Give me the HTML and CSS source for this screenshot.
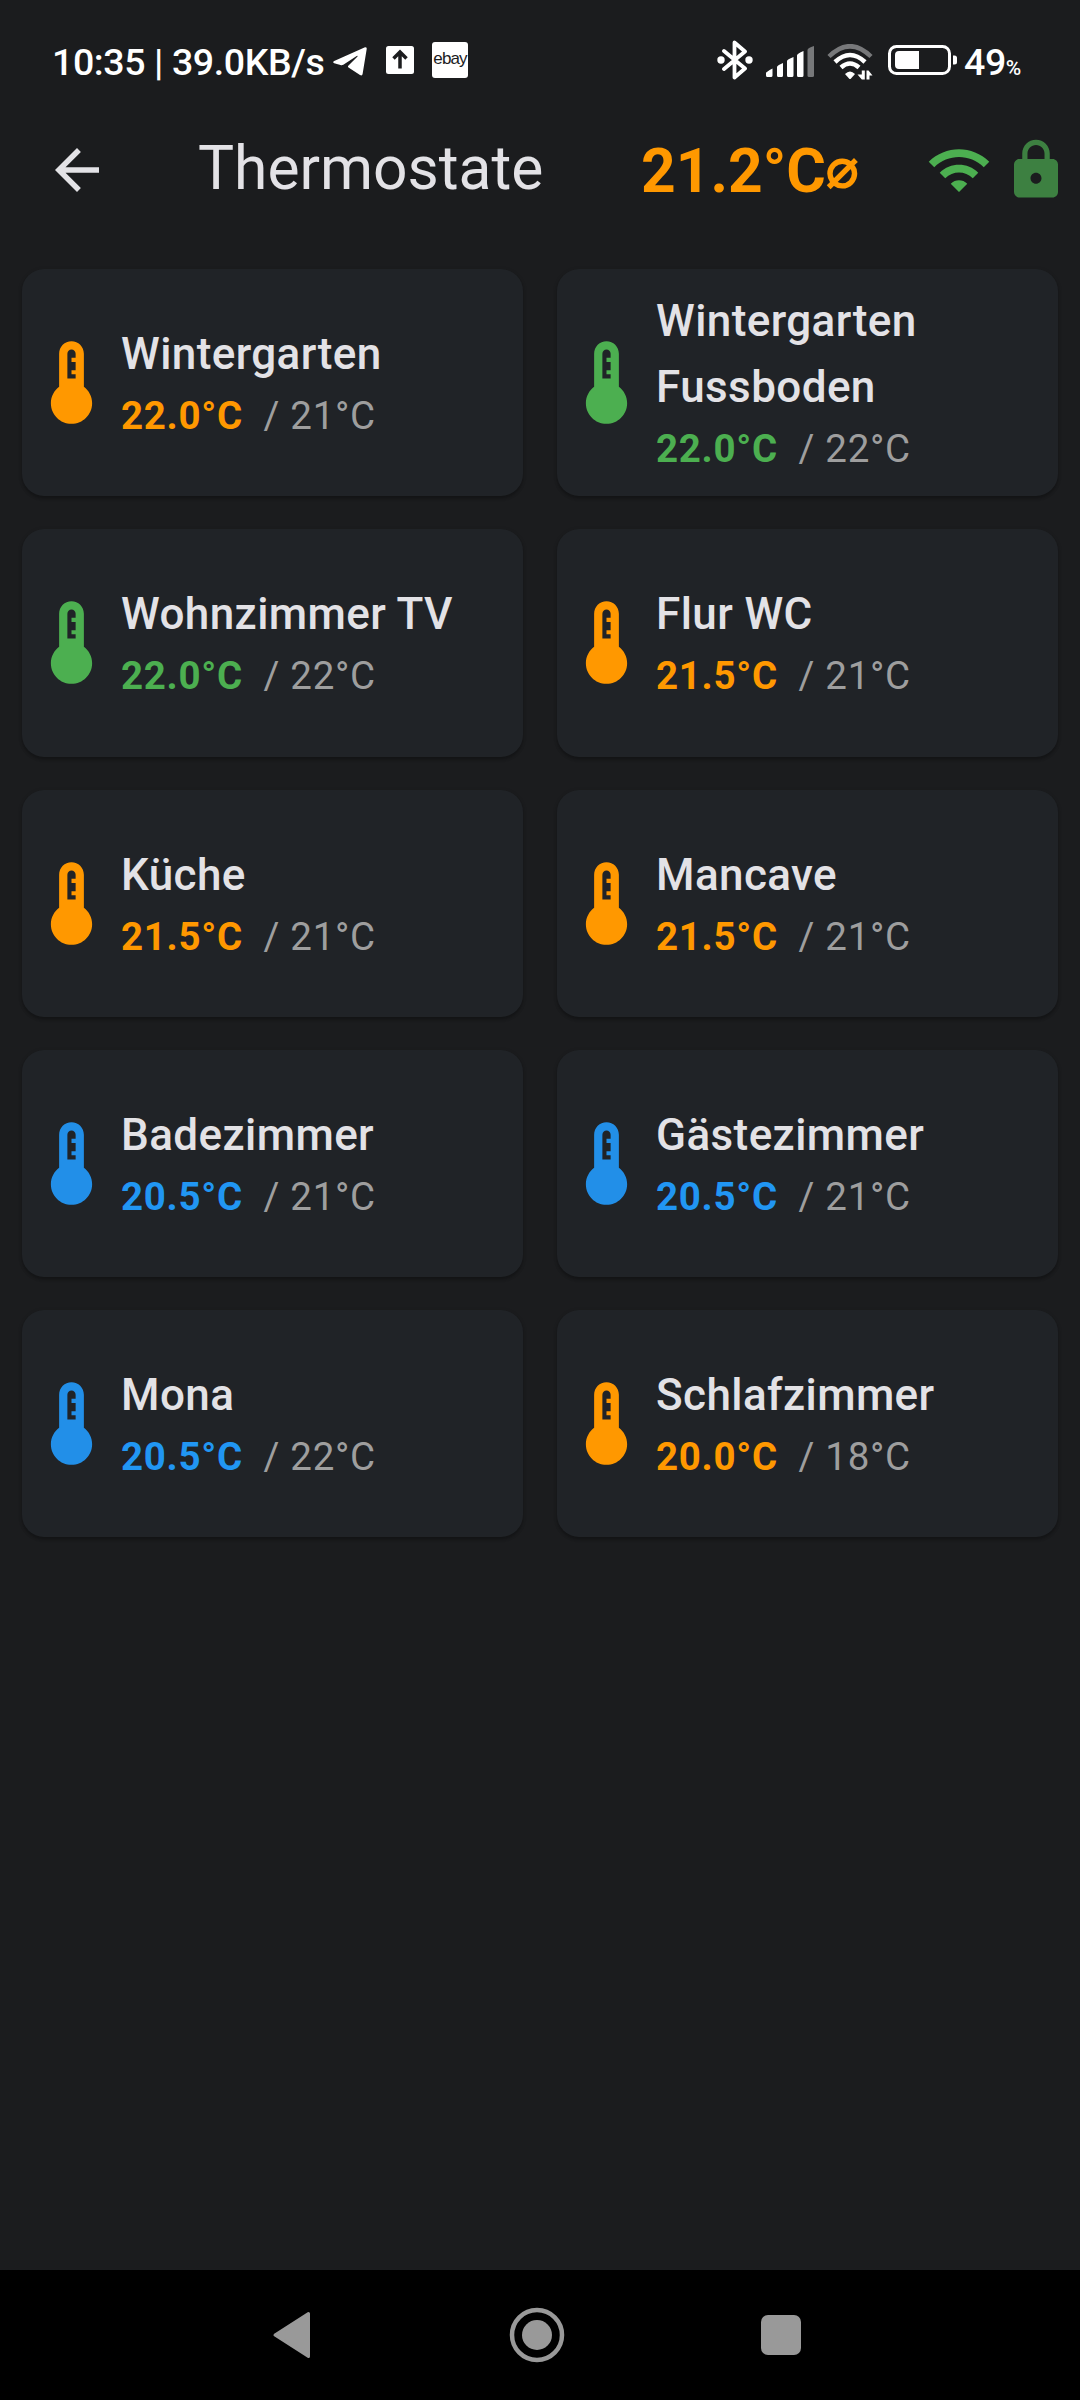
FILE: index.html
```html
<!DOCTYPE html>
<html lang="de">
<head>
<meta charset="utf-8">
<title>Thermostate</title>
<link rel="stylesheet" href="styles.css">
</head>
<body>
<svg class="defs" width="0" height="0" aria-hidden="true">
  <symbol id="thermo" viewBox="0 0 24 24"><path d="M15 13V5c0-1.66-1.34-3-3-3S9 3.34 9 5v8c-1.21.91-2 2.37-2 4 0 2.76 2.24 5 5 5s5-2.24 5-5c0-1.63-.79-3.09-2-4zm-4-2V5c0-.55.45-1 1-1s1 .45 1 1v1h-1v1h1v2h-1v1h1v1h-2z"/></symbol>
</svg>

<div class="status">
  <span class="clock">10:35 | 39.0KB/s</span>
  <svg class="telegram" viewBox="0 0 34 29"><path d="M32 .2Q34 0 33.700 2L29.600 27Q29.200 29.200 27 28L15.500 20.500Q14.400 19.500 15.500 18.400L24.500 9.500Q25 8.500 23.700 9L10.300 17.700Q9 18.500 7.500 18L1.200 16.200Q-.8 15.200 1.200 14Z"/></svg>
  <svg class="upload" viewBox="0 0 28 28"><rect width="28" height="28" rx="2.500"/><path d="M14 22.500V7M7.500 12.500 14 6l6.500 6.500"/></svg>
  <span class="ebay">ebay</span>
  <span class="fill"></span>
  <svg class="bt" viewBox="0 0 36 40"><path d="M7 11 28 28.500 17.500 37.500V2.500L28 11.500 7 29"/><circle cx="4" cy="20" r="3.700"/><circle cx="32" cy="20" r="3.700"/></svg>
  <svg class="signal" viewBox="0 0 48 31"><path d="M0 27q0-1 6.500-4.500V29.500q0 1.500-1.500 1.500H1.500Q0 31 0 29.500ZM11 21q0-1.500 6-4V29.500q0 1.500-1.500 1.500h-3Q11 31 11 29.500ZM21 15q0-1.500 6.500-4V29.500q0 1.500-1.500 1.500h-3.500Q21 31 21 29.500ZM31 9.500q0-2 6.500-4.500V29.500q0 1.500-1.500 1.500h-3.500Q31 31 31 29.500Z"/><path class="dim" d="M41.500 4q0-2 6.500-4V29.500q0 1.500-1.500 1.500H43q-1.500 0-1.500-1.500Z"/></svg>
  <svg class="swifi" viewBox="0 0 46 36"><g class="arcs"><path class="dimline" d="M2 12.500Q23-8 44 12.500"/><path d="M8 18Q23 4 38 18"/><path d="M14 23.500Q23 15.500 32 23.500"/></g><path d="M18 30Q23 25 28 30L24 34.500Q23 35.500 22 34.500Z"/><path d="M37.800 26.500v9h-3l-4.300-5h4.300v-4ZM39.500 35.500V26.500h2l4 5h-3v4Z"/></svg>
  <svg class="batt" viewBox="0 0 70 30"><rect class="case" x="1.500" y="1.500" width="60" height="27" rx="7"/><path d="M11 6H31V24H11Q7 24 7 20V10Q7 6 11 6Z"/><path d="M65 10.500h1.500q2.500 0 2.500 2.500v4q0 2.500-2.500 2.500H65Z"/></svg>
  <span class="pct">49<small>%</small></span>
</div>

<header class="bar">
  <svg class="back" viewBox="0 0 24 24"><path d="M20 11H7.830l5.590-5.590L12 4l-8 8 8 8 1.410-1.410L7.830 13H20z"/></svg>
  <h1 class="title">Thermostate</h1>
  <div class="avg">21.2°C<span class="dia">⌀</span></div>
  <svg class="wifi" viewBox="0 0 24 24"><path d="M1 9l2 2c4.970-4.970 13.030-4.970 18 0l2-2C16.930 2.930 7.080 2.930 1 9zm8 8l3 3 3-3c-1.650-1.660-4.340-1.660-6 0zm-4-4l2 2c2.760-2.760 7.240-2.760 10 0l2-2C15.140 9.140 8.870 9.140 5 13z"/></svg>
  <svg class="lock" viewBox="0 0 24 24"><path d="M18 8h-1V6c0-2.760-2.240-5-5-5S7 3.240 7 6v2H6c-1.100 0-2 .9-2 2v10c0 1.100.9 2 2 2h12c1.100 0 2-.9 2-2V10c0-1.100-.9-2-2-2zm-6 9c-1.100 0-2-.9-2-2s.9-2 2-2 2 .9 2 2-.9 2-2 2zm3.100-9H8.900V6c0-1.710 1.390-3.100 3.100-3.100 1.710 0 3.100 1.390 3.100 3.100v2z"/></svg>
</header>

<main class="grid">
  <section class="card warm"><svg class="icon"><use href="#thermo"/></svg><div><h2>Wintergarten</h2><p><b>22.0°C</b> / 21°C</p></div></section>
  <section class="card ok"><svg class="icon"><use href="#thermo"/></svg><div><h2>Wintergarten Fussboden</h2><p><b>22.0°C</b> / 22°C</p></div></section>
  <section class="card ok"><svg class="icon"><use href="#thermo"/></svg><div><h2>Wohnzimmer TV</h2><p><b>22.0°C</b> / 22°C</p></div></section>
  <section class="card warm"><svg class="icon"><use href="#thermo"/></svg><div><h2>Flur WC</h2><p><b>21.5°C</b> / 21°C</p></div></section>
  <section class="card warm"><svg class="icon"><use href="#thermo"/></svg><div><h2>Küche</h2><p><b>21.5°C</b> / 21°C</p></div></section>
  <section class="card warm"><svg class="icon"><use href="#thermo"/></svg><div><h2>Mancave</h2><p><b>21.5°C</b> / 21°C</p></div></section>
  <section class="card cold"><svg class="icon"><use href="#thermo"/></svg><div><h2>Badezimmer</h2><p><b>20.5°C</b> / 21°C</p></div></section>
  <section class="card cold"><svg class="icon"><use href="#thermo"/></svg><div><h2>Gästezimmer</h2><p><b>20.5°C</b> / 21°C</p></div></section>
  <section class="card cold"><svg class="icon"><use href="#thermo"/></svg><div><h2>Mona</h2><p><b>20.5°C</b> / 22°C</p></div></section>
  <section class="card warm"><svg class="icon"><use href="#thermo"/></svg><div><h2>Schlafzimmer</h2><p><b>20.0°C</b> / 18°C</p></div></section>
</main>

<nav class="nav">
  <svg viewBox="0 0 60 60"><path d="M12 30 45.500 8.500V51.500Z"/></svg>
  <svg viewBox="0 0 60 60"><circle class="ring" cx="30" cy="30" r="25"/><circle cx="30" cy="30" r="15"/></svg>
  <svg viewBox="0 0 60 60"><rect x="10" y="10" width="40" height="40" rx="7"/></svg>
</nav>
</body>
</html>
```
FILE: styles.css
```css
* { box-sizing: border-box; }
body {
  margin: 0;
  width: 1080px;
  height: 2400px;
  display: flex;
  flex-direction: column;
  background: #1b1c1e;
  color: #e3e2e6;
  font-family: Roboto, "Noto Sans", sans-serif;
}
h1, h2, p { margin: 0; font-weight: 400; }
svg { display: block; flex: none; fill: currentColor; }
.defs { display: none; }

.status {
  height: 120px;
  padding: 0 59px 0 52px;
  display: flex;
  align-items: center;
  color: #fff;
}
.clock { font-size: 37.5px; font-weight: 500; line-height: 44px; width: 281px; letter-spacing: -.4px; white-space: nowrap; margin-top: 3px; }
.telegram { width: 34px; height: 29px; margin-top: 3px; }
.upload { width: 28px; height: 28px; margin-left: 19px; }
.upload path { fill: none; stroke: #1b1c1e; stroke-width: 3.5; }
.ebay {
  width: 36px; height: 36px; margin-left: 18px;
  border-radius: 3px; background: #fff; color: #1b1c1e;
  font: 17px/34px "Liberation Sans", sans-serif;
  letter-spacing: -.9px; text-align: center;
}
.fill { flex: 1; }
.bt { width: 36px; height: 40px; }
.bt path { fill: none; stroke: currentColor; stroke-width: 3.8; stroke-linejoin: round; stroke-linecap: round; }
.signal { width: 48px; height: 31px; margin-left: 13px; margin-top: 2px; }
.dim { fill: #77787a; }
.swifi { width: 46px; height: 36px; margin-left: 13px; margin-top: 3px; }
.arcs path { fill: none; stroke: currentColor; stroke-width: 4.5; }
.arcs .dimline { stroke: #77787a; }
.batt { width: 70px; height: 30px; margin-left: 15px; }
.batt .case { fill: none; stroke: currentColor; stroke-width: 3; }
.pct { width: 57px; margin-left: 6px; margin-top: 3px; font-size: 37.5px; font-weight: 500; line-height: 44px; white-space: nowrap; letter-spacing: -.4px; }
.pct small { font-size: 21px; line-height: 0; }

.bar { height: 149px; padding: 17px 11px 0 44px; display: flex; align-items: flex-start; }
.back, .wifi, .lock { width: 66px; height: 66px; }
.title { margin-left: 88px; width: 443px; font-size: 60.5px; line-height: 66px; margin-top: -1px; }
.avg { width: 285px; color: #ff9800; font-size: 60.5px; font-weight: 700; line-height: 66px; margin-top: 2px; white-space: nowrap; }
.dia { font-size: 54px; line-height: 0; vertical-align: 5px; }
.wifi { color: #4caf50; }
.lock { color: #3d8041; margin-left: 11px; }

.grid {
  flex: 1;
  padding: 0 22px;
  display: grid;
  grid-template-columns: 501px 501px;
  justify-content: space-between;
  grid-auto-rows: 227.25px;
  row-gap: 33px;
}
.card {
  display: flex;
  align-items: center;
  border-radius: 22px;
  background: #202327;
  box-shadow: 0 3px 3px rgba(0, 0, 0, .2), 0 1px 4px rgba(0, 0, 0, .15);
}
.card div { flex: 1; padding-right: 44px; }
.icon { width: 99px; height: 99px; }
.card h2 { font-size: 44px; line-height: 66px; font-weight: 500; letter-spacing: .41px; margin: -1px 0 1px; }
.card p { font-size: 38.5px; line-height: 55px; letter-spacing: .69px; color: #9e9e9e; white-space: nowrap; }
.card b { font-weight: 700; margin-right: 10.5px; }
.warm .icon, .warm b { color: #ff9800; }
.ok .icon, .ok b { color: #4caf50; }
.cold .icon { color: #228fe8; }
.cold b { color: #2196f3; }

.nav { height: 130px; padding-right: 6px; background: #000; color: #999; display: flex; align-items: center; justify-content: center; gap: 184px; }
.nav svg { width: 60px; height: 60px; }
.nav path { stroke: currentColor; stroke-width: 3; stroke-linejoin: round; }
.nav .ring { fill: none; stroke: currentColor; stroke-width: 4.5; }
```
